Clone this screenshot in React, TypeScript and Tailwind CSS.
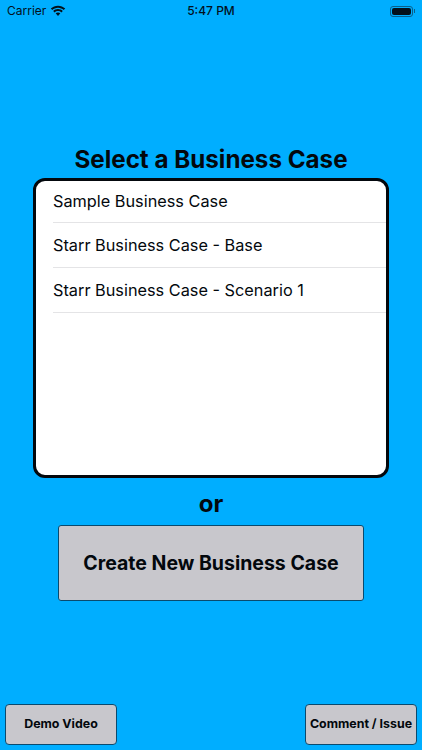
const cases = ['Sample Business Case', 'Starr Business Case - Base', 'Starr Business Case - Scenario 1']

function StatusBar() {
  return (
    <div className="flex h-[22px] items-center justify-between pl-[7px] pr-[7px] text-[12px] text-[#03111c]">
      <div className="flex w-[100px] items-center gap-[4px]">
        <span>Carrier</span>
        <svg width="16" height="12" viewBox="0 0 16 12" fill="#03111c" className="-mt-[1px]">
          <path d="M8 2.800c2.300 0 4.200.9 5.700 2.300l1.500-1.500C13.300 1.800 10.800.7 8 .7S2.700 1.800.8 3.600l1.500 1.500C3.800 3.700 5.700 2.800 8 2.800z" />
          <path d="M8 6.100c1.300 0 2.400.5 3.300 1.300l1.500-1.500C11.500 4.700 9.800 4 8 4s-3.500.7-4.800 1.900l1.500 1.500C5.600 6.600 6.700 6.100 8 6.100z" />
          <path d="M8 7.400c-.9 0-1.700.3-2.300.9L8 11l2.300-2.700c-.6-.6-1.400-.9-2.300-.9z" />
        </svg>
      </div>
      <span className="font-medium">5:47 PM</span>
      <div className="flex w-[100px] items-center justify-end">
        <div className="rounded-[3px] border border-[#0a5f8a] p-[1px]">
          <div className="h-[7px] w-[19px] rounded-[2px] bg-[#03111c]" />
        </div>
        <div className="ml-[1px] h-[4px] w-[1px] bg-[#0a5f8a]" />
      </div>
    </div>
  )
}

export default function App() {
  return (
    <div className="flex h-[750px] w-[422px] flex-col overflow-hidden bg-[#00aeff] font-['Inter',sans-serif] text-[#03080d]">
      <StatusBar />

      <h1 className="mt-[123px] text-center text-[24.200px] leading-[30px] font-bold">Select a Business Case</h1>

      <div className="mx-[33px] mt-[3px] h-[300px] rounded-[12px] border-[3px] border-[#03080d] bg-white pl-[17px]">
        {cases.map((name, i) => (
          <div
            key={name}
            className={
              i === 0
                ? 'flex h-[42px] items-center border-b border-[#e4e4e6] text-[16.300px]'
                : 'flex h-[45px] items-center border-b border-[#e4e4e6] pt-[1px] text-[16.300px]'
            }
          >
            {name}
          </div>
        ))}
      </div>

      <div className="mt-[11px] text-center text-[24px] leading-[30px] font-bold">or</div>

      <button className="mx-auto mt-[6px] h-[76px] w-[306px] rounded-[3px] border border-[#0a4a6e] bg-[#c8c7cc] pt-[1px] text-[19.500px] font-bold">
        Create New Business Case
      </button>

      <div className="mt-auto mb-[5px] flex justify-between pr-[5px] pl-[5px]">
        <button className="h-[41px] w-[112px] rounded-[4px] border border-[#0a4a6e] bg-[#c8c7cc] text-[12.400px] font-bold">
          Demo Video
        </button>
        <button className="h-[41px] w-[112px] rounded-[4px] border border-[#0a4a6e] bg-[#c8c7cc] text-[12.400px] font-bold">
          Comment / Issue
        </button>
      </div>
    </div>
  )
}
